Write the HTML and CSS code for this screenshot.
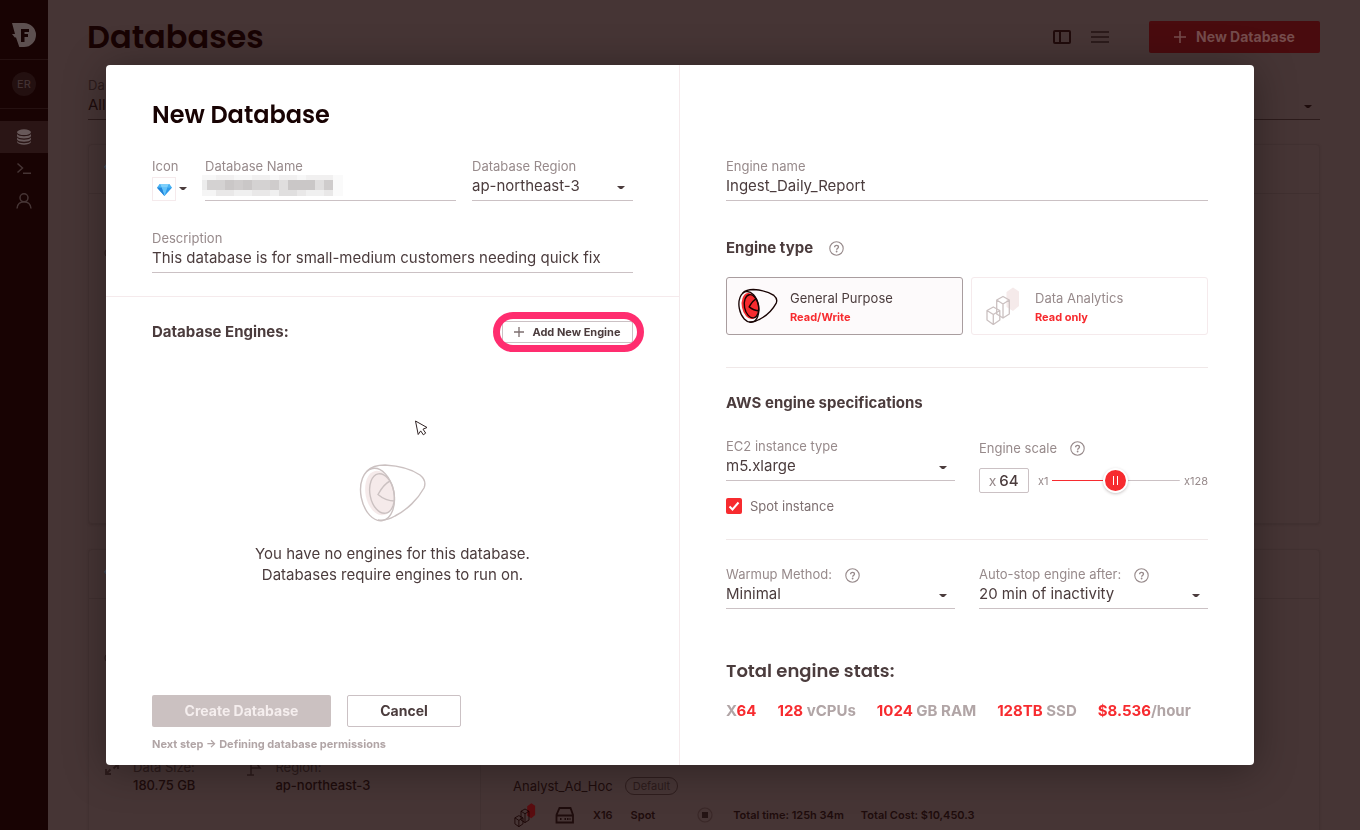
FILE: index.html
```html
<!DOCTYPE html>
<html lang="en">
<head>
<meta charset="utf-8">
<title>Databases</title>
<meta name="viewport" content="width=device-width, initial-scale=1">
<link rel="stylesheet" href="styles.css">
</head>
<body>
<svg class="defs" aria-hidden="true">
  <symbol id="plus" viewBox="0 0 12 12"><path d="M6 0v12M0 6h12" fill="none" stroke="currentColor" stroke-width="1.6"/></symbol>
  <symbol id="diamond" viewBox="0 0 16 14">
    <path d="M3 1h10l3 4-8 9-8-9z" fill="#2f9bea"/>
    <path d="M3 1h10l-2 4H5z" fill="#7fd0fb"/>
    <path d="M3 1L0 5h5zM13 1l3 4h-5z" fill="#49b4f5"/>
    <path d="M5 5h6l-3 9z" fill="#63c3fa"/>
    <path d="M0 5h5l3 9z" fill="#2484d8"/>
  </symbol>
  <symbol id="help" viewBox="0 0 15 15">
    <circle cx="7.500" cy="7.500" r="6.700" fill="none" stroke="currentColor" stroke-width="1.100"/>
    <path d="M5.600 6.200c0-1.200.8-1.900 1.950-1.900s1.900.7 1.900 1.700c0 1.500-1.800 1.400-1.800 2.700" fill="none" stroke="currentColor" stroke-width="1.350"/>
    <circle cx="7.600" cy="10.500" r=".9" fill="currentColor"/>
  </symbol>
  <symbol id="caret" viewBox="0 0 8 4"><path d="M.5 0h7v.6L5 2.900H3L.5.6z" fill="currentColor"/></symbol>
  <symbol id="engine" viewBox="0 0 68 60">
    <ellipse class="engine-core" cx="20.500" cy="30" rx="14" ry="22.500" transform="rotate(-11 20.500 30)"/>
    <g fill="none" stroke="currentColor">
      <ellipse cx="18.500" cy="31.500" rx="16.500" ry="26.500" transform="rotate(-11 18.500 31.500)"/>
      <ellipse cx="23" cy="30.500" rx="12" ry="20" transform="rotate(-11 23 30.500)"/>
      <path d="M8 8C13 3 19 2 26 2c17 1 28 5 35 10 5 4 6 8 4 13-6 11-17 22-29 28-6 3.500-11 5-17 4"/>
      <path d="M31 18c-4 2-9 8-12 13.500 4 3.500 11 6.500 17 6.500"/>
    </g>
  </symbol>
  <symbol id="cubes" viewBox="0 0 34 38">
    <path class="cube-back" d="M27 .5l6 4v14.500l-6 5-6.500-4V5z"/>
    <g fill="none" stroke="currentColor" stroke-width="1.300" stroke-linejoin="round">
      <path d="M17 9.500l6.300 3.500v14L17 31l-6.300-4V13zM10.700 13l6.300 4 6.300-4M17 17v14"/>
      <path d="M7.300 20l6.500 3.500v9.500l-6.500 4.500L1 33v-9.500zM1 23.500l6.300 4 6.500-4M7.300 27.500v10"/>
    </g>
  </symbol>
</svg>

<div class="app">
  <nav class="sidebar" aria-label="Main">
    <a class="logo" href="#" aria-label="Home">
      <svg width="24" height="24" viewBox="0 0 24 24"><path fill="#5d5050" d="M0 0h12a12 12 0 0 1 0 24H7.300L4 14.500H2.800L0 11h3z"/><path fill="#180303" d="M9 6h8v3h-4.500v2H16v3h-3.500v5H9z"/></svg>
    </a>
    <div class="account"><span class="avatar">ER</span></div>
    <a class="nav-item active" href="#" aria-label="Databases">
      <svg width="16" height="16" viewBox="0 0 16 16"><ellipse cx="8" cy="3.200" rx="7" ry="2.900" fill="#675859"/><path d="M1 5c1.500 3 12.500 3 14 0v2.200c-1.500 3-12.500 3-14 0zM1 8.600c1.500 3 12.500 3 14 0v1.900c-1.500 3-12.500 3-14 0zM1 11.900c1.500 3 12.500 3 14 0v1c-1.500 3.700-12.500 3.700-14 0z" fill="#675859"/></svg>
    </a>
    <a class="nav-item" href="#" aria-label="SQL">
      <svg width="16" height="16" viewBox="0 0 16 16" fill="none" stroke="#463535" stroke-width="1.500"><path d="M1.500 2.500l5 4.500-5 4.500M7 12.200h8"/></svg>
    </a>
    <a class="nav-item" href="#" aria-label="Users">
      <svg width="16" height="16" viewBox="0 0 16 16" fill="none" stroke="#463535" stroke-width="1.500"><circle cx="8" cy="4.800" r="4"/><path d="M1 15.500c.5-9 13.500-9 14 0"/></svg>
    </a>
  </nav>

  <main class="page">
    <header class="page-head">
      <h1>Databases</h1>
      <button class="icon-button" aria-label="Card view"><svg width="18" height="14" viewBox="0 0 18 14" fill="none" stroke="#200b0b" stroke-width="2"><rect x="1" y="1" width="16" height="12" rx="1"/><path d="M7 1v12"/></svg></button>
      <button class="icon-button" aria-label="List view"><svg width="18" height="12" viewBox="0 0 18 12" stroke="#2c1b1b" stroke-width="1.800"><path d="M0 1h18M0 6h18M0 11h18"/></svg></button>
      <button class="new-button"><svg width="12" height="12"><use href="#plus"/></svg>New Database</button>
    </header>
    <div class="filter">
      <label for="filter">Da</label>
      <select id="filter"><option>All</option></select>
    </div>
    <section class="card">
      <div class="card-head"><svg width="16" height="14"><use href="#diamond"/></svg></div>
      <div class="card-body first">
        <div class="card-side"><svg width="12" height="12" viewBox="0 0 12 12" fill="none" stroke="#2c1b1b"><circle cx="6" cy="6" r="5"/></svg></div>
      </div>
    </section>
    <section class="card">
      <div class="card-head"><svg width="16" height="14"><use href="#diamond"/></svg></div>
      <div class="card-body">
        <div class="card-side">
          <svg width="12" height="12" viewBox="0 0 12 12" fill="none" stroke="#2c1b1b"><circle cx="6" cy="6" r="5"/></svg>
          <dl class="facts">
            <div class="fact">
              <svg width="16" height="16" viewBox="0 0 16 16" fill="none" stroke="#2c1b1b" stroke-width="1.800"><path d="M2 9v5h5M2.500 13.500l4-4M9 4h5v5M13.500 4.500l-4 4"/></svg>
              <div><dt>Data Size:</dt><dd>180.75 GB</dd></div>
            </div>
            <div class="fact">
              <svg width="16" height="16" viewBox="0 0 16 16" fill="none" stroke="#2c1b1b" stroke-width="1.500"><path d="M5 1v14M1 15h7M5 3h9l-2 2.500 2 2.500H5"/></svg>
              <div><dt>Region:</dt><dd>ap-northeast-3</dd></div>
            </div>
          </dl>
        </div>
        <div class="card-engines">
          <div class="engine-title">Analyst_Ad_Hoc <span class="tag">Default</span></div>
          <div class="engine-row">
            <svg class="cubes-dark" width="24" height="24"><use href="#cubes"/></svg>
            <svg class="drive" width="20" height="17" viewBox="0 0 20 17" fill="none" stroke="#1e0c0c" stroke-width="1.800"><path d="M4.500 1h11L18 8v7.500H1.500V8zM1.500 8.500H18"/><path d="M5 12h1.500M9.500 12h6" stroke-dasharray="1.500 1"/></svg>
            <span class="scale">X16</span>
            <span class="spot">Spot</span>
            <svg class="stop" width="16" height="16" viewBox="0 0 16 16"><circle cx="8" cy="8" r="7" fill="none" stroke="#3a2828" stroke-width="1.200"/><path fill="#241414" d="M5 5h6v6H5z"/></svg>
            <span class="time">Total time: 125h 34m</span>
            <span>Total Cost: $10,450.3</span>
          </div>
        </div>
      </div>
    </section>
  </main>
</div>

<div class="backdrop">
  <form class="modal" role="dialog" aria-labelledby="dialog-title">
    <div class="pane pane-left">
      <div class="details">
        <h2 id="dialog-title">New Database</h2>
        <div class="detail-grid">
          <div class="field">
            <span class="label" id="icon-label">Icon</span>
            <button type="button" class="icon-picker" aria-labelledby="icon-label">
              <span class="icon-box"><svg width="15" height="13"><use href="#diamond"/></svg></span>
              <svg width="8" height="4"><use href="#caret"/></svg>
            </button>
          </div>
          <div class="field redacted">
            <label for="db-name">Database Name</label>
            <input id="db-name" type="text">
            <svg class="mosaic" width="143" height="21" viewBox="0 0 143 21" shape-rendering="crispEdges" aria-hidden="true">
              <path fill="#f7f7f7" d="M0 0h14v5H0zM32 0h18v5H32zM68 0h9v5h-9zM95 0h9v5h-9z"/>
              <path fill="#f1f0f0" d="M14 0h18v5H14zM50 0h18v5H50zM77 0h18v5H77zM104 0h27v5h-27z"/>
              <path fill="#fafafa" d="M131 0h10v21h-10z"/>
              <path fill="#ececec" d="M0 5h5v10H0z"/>
              <path fill="#d4d2d2" d="M5 5h18v10H5zM50 5h18v10H50z"/>
              <path fill="#cac7c7" d="M23 5h9v10h-9zM41 5h9v10h-9zM86 5h27v10H86z"/>
              <path fill="#cfcccc" d="M32 5h9v10h-9zM68 5h9v10h-9zM122 5h9v10h-9z"/>
              <path fill="#e0dede" d="M77 5h9v10h-9zM113 5h9v10h-9z"/>
              <path fill="#f5f5f5" d="M0 15h14v6H0z"/>
              <path fill="#e9e8e8" d="M14 15h18v6H14zM50 15h18v6H50zM95 15h9v6h-9zM122 15h9v6h-9z"/>
              <path fill="#f0f0f0" d="M32 15h18v6H32zM68 15h9v6h-9zM104 15h18v6h-18z"/>
              <path fill="#e0dfdf" d="M77 15h18v6H77z"/>
            </svg>
          </div>
          <div class="field">
            <label for="db-region">Database Region</label>
            <select id="db-region"><option>ap-northeast-3</option></select>
          </div>
        </div>
        <div class="field">
          <label for="db-desc">Description</label>
          <input id="db-desc" type="text" value="This database is for small-medium customers needing quick fix">
        </div>
      </div>

      <div class="engines">
        <div class="engines-head">
          <h3>Database Engines:</h3>
          <div class="highlight">
            <button type="button" class="add-button"><svg width="10" height="10"><use href="#plus"/></svg>Add New Engine</button>
          </div>
        </div>
        <div class="empty">
          <svg class="engine-pale" width="68" height="60"><use href="#engine"/></svg>
          <p>You have no engines for this database.<br>Databases require engines to run on.</p>
        </div>
        <div class="actions">
          <button type="button" class="create" disabled>Create Database</button>
          <button type="button" class="cancel">Cancel</button>
        </div>
        <p class="next">Next step → Defining database permissions</p>
      </div>
    </div>

    <div class="pane pane-right">
      <div class="field">
        <label for="engine-name">Engine name</label>
        <input id="engine-name" type="text" value="Ingest_Daily_Report">
      </div>

      <h3 class="type-title">Engine type <svg class="help" width="15" height="15"><use href="#help"/></svg></h3>
      <div class="types">
        <label class="type chosen">
          <input type="radio" name="type" checked>
          <svg class="engine-red" width="40" height="36"><use href="#engine"/></svg>
          <span class="type-text">General Purpose<b>Read/Write</b></span>
        </label>
        <label class="type">
          <input type="radio" name="type">
          <svg class="cubes-pale" width="40" height="38"><use href="#cubes"/></svg>
          <span class="type-text">Data Analytics<b>Read only</b></span>
        </label>
      </div>

      <hr>
      <h3>AWS engine specifications</h3>
      <div class="pair specs">
        <div>
          <div class="field">
            <label for="ec2">EC2 instance type</label>
            <select id="ec2"><option>m5.xlarge</option></select>
          </div>
          <label class="check"><input type="checkbox" checked>Spot instance</label>
        </div>
        <div class="scale-field">
          <label for="scale">Engine scale <svg class="help" width="15" height="15"><use href="#help"/></svg></label>
          <div class="scale-row">
            <span class="scale-box">x<input type="text" value="64" aria-label="Scale value"></span>
            <span>x1</span>
            <input id="scale" class="slider" type="range" min="1" max="128" value="64">
            <span>x128</span>
          </div>
        </div>
      </div>

      <hr class="hr-second">
      <div class="pair">
        <div class="field">
          <label for="warmup">Warmup Method: <svg class="help" width="15" height="15"><use href="#help"/></svg></label>
          <select id="warmup"><option>Minimal</option></select>
        </div>
        <div class="field">
          <label for="autostop">Auto-stop engine after: <svg class="help" width="15" height="15"><use href="#help"/></svg></label>
          <select id="autostop"><option>20 min of inactivity</option></select>
        </div>
      </div>

      <h2 class="stats-title">Total engine stats:</h2>
      <div class="stats">
        <span>X<b>64</b></span>
        <span><b>128</b> vCPUs</span>
        <span><b>1024</b> GB RAM</span>
        <span><b>128TB</b> SSD</span>
        <span><b>$8.536</b>/hour</span>
      </div>
    </div>
  </form>
</div>

<svg class="cursor" width="14" height="17" viewBox="0 0 14 17" aria-hidden="true"><path d="M1.500 1l11.500 6.500-4 1.700 2.700 3.900-2.400 1.700-2.600-3.900L4.200 14.500z" fill="#fff" stroke="#2f2223" stroke-width="1"/></svg>
</body>
</html>
```

FILE: styles.css
```css
* { box-sizing: border-box; }

body {
  margin: 0;
  background: #463535;
  color: #4b3c3d;
  font: 13px/16px Inter, "Liberation Sans", sans-serif;
}

h1, h2, h3, p, dl, dd { margin: 0; }
button, input, select { font: inherit; color: inherit; }
button { margin: 0; padding: 0; border: 0; background: none; }
svg { flex: none; }
.defs { display: none; }

/* Page behind the dialog */
.app { display: flex; height: 100vh; overflow: hidden; }

.sidebar { width: 48px; flex: none; background: #180303; }
.logo { display: flex; justify-content: center; padding: 23px 0 12px; border-bottom: 1px solid #251111; }
.account { display: flex; justify-content: center; padding: 12px 0; margin-bottom: 12px; border-bottom: 1px solid #251111; }
.avatar { width: 24px; height: 24px; border-radius: 50%; background: #231010; color: #423132; font-size: 11px; font-weight: 500; line-height: 24px; text-align: center; }
.nav-item { display: flex; align-items: center; justify-content: center; height: 32px; }
.nav-item.active { background: #2a1515; }

.page { flex: 1; padding: 20px 40px 0 39px; }
.page-head { display: flex; align-items: center; height: 34px; }
.page-head h1 { margin-right: auto; color: #180303; font: 600 32px/34px Poppins, Inter, sans-serif; }
.icon-button { display: flex; margin-right: 20px; }
.new-button { display: flex; align-items: center; justify-content: center; gap: 10px; width: 171px; height: 32px; margin-left: 20px; border-radius: 2px; background: #490b0e; color: #754c4c; font-size: 14px; font-weight: 700; }

.filter { margin: 23px 0 24px 1px; color: #2c1b1b; }
.filter label { display: block; line-height: 17px; }
.filter select { width: 100%; height: 26px; padding: 0 0 4px; border: 0; border-bottom: 1px solid #2c1b1b; border-radius: 0; appearance: none; color: #1e0c0c; font-size: 15px; line-height: 20px;
  background: url("data:image/svg+xml,%3Csvg xmlns='http://www.w3.org/2000/svg' width='8' height='4'%3E%3Cpath d='M.5 0h7v.6L5 2.900H3L.5.6z' fill='%231e0c0c'/%3E%3C/svg%3E") no-repeat right 8px top 11px; }

.card { margin: 0 0 25px 1px; border: 1px solid #413131; border-radius: 4px; box-shadow: 0 1px 2px #403030; }
.card-head { display: flex; align-items: center; height: 49px; padding-left: 15px; border-bottom: 1px solid #403030; }
.card-head svg { opacity: .2; }
.card-body { display: flex; min-height: 329px; }
.card-side { width: 392px; padding: 52px 15px 0; border-right: 1px solid #413131; }
.card-body.first .card-side { border: 0; }
.facts { display: flex; gap: 51px; margin-top: 91px; color: #1e0c0c; font-size: 13px; }
.fact { display: flex; gap: 13px; }
.fact svg { margin-top: 2px; }
.fact dt { color: #2c1b1b; line-height: 18px; }
.fact dd { font-weight: 500; line-height: 18px; }
.card-engines { padding: 177px 0 0 32px; color: #1e0c0c; }
.engine-title { display: flex; align-items: center; gap: 12px; font-size: 13px; line-height: 20px; }
.tag { padding: 0 7px; border: 1px solid #2f1e1e; border-radius: 9px; color: #2c1b1b; font-size: 11px; line-height: 16px; }
.engine-row { display: flex; align-items: center; height: 24px; margin-top: 7px; font-size: 11px; font-weight: 600; }
.drive { margin-left: 18px; }
.scale { margin-left: 18px; }
.spot { margin-left: 18px; }
.stop { margin: 0 20px 0 42px; }
.time { margin-right: 17px; }
.cubes-dark { --cube: #5a0d10; color: #180303; }
.cubes-pale { --cube: #f5eaea; color: #cbc1c1; }
.cube-back { fill: var(--cube); }

/* Dialog */
.backdrop { position: fixed; inset: 0; display: flex; padding: 65px 106px; overflow: auto; }
.modal { display: grid; grid-template-columns: 1fr 1fr; width: 100%; min-height: max-content; border-radius: 4px; background: #fff; box-shadow: 0 4px 40px rgba(0, 0, 0, .35); }
.pane-left { display: flex; flex-direction: column; border-right: 1px solid #f5eaec; }
.details { padding: 35px 46px 23px; border-bottom: 1px solid #f5eaec; }
h2 { color: #180303; font: 600 24px/30px Poppins, Inter, sans-serif; }
h3 { display: flex; align-items: center; gap: 16px; font-size: 15px; font-weight: 700; line-height: 20px; }

.detail-grid { display: grid; grid-template-columns: 37px 1fr 161px; gap: 16px; margin: 29px 0 30px; }
.field { display: flex; flex-direction: column; min-width: 0; }
.field > label, .label { display: flex; align-items: center; gap: 13px; height: 16px; padding-bottom: 2px; color: #978a8b; white-space: nowrap; }
.help { color: #978a8b; }
.field > label .help { margin-top: 2px; }
.field input, .field select { width: 100%; height: 26px; padding: 0 0 4px; border: 0; border-bottom: 1px solid #cbc1c4; border-radius: 0; background: none; outline: 0; font-size: 15px; }
.field select { appearance: none;
  background: url("data:image/svg+xml,%3Csvg xmlns='http://www.w3.org/2000/svg' width='8' height='4'%3E%3Cpath d='M.5 0h7v.6L5 2.900H3L.5.6z' fill='%234b3c3d'/%3E%3C/svg%3E") no-repeat right 8px top 11px; }
.icon-picker { display: flex; align-items: center; gap: 3px; height: 24px; margin-top: 2px; }
.icon-box { display: flex; align-items: center; justify-content: center; width: 24px; height: 24px; border: 1px solid #f5eaec; }
.redacted { position: relative; }
.mosaic { position: absolute; left: -3px; top: 16px; }

.engines { display: flex; flex: 1; flex-direction: column; padding: 24px 46px 14px; }
.engines-head { display: flex; align-items: center; justify-content: space-between; }
.highlight { position: relative; }
.highlight::after { content: ""; position: absolute; inset: -9px -11px -9px -9px; border: 7px solid #ff2d6f; border-radius: 20px; pointer-events: none; }
.add-button { display: flex; align-items: center; justify-content: center; gap: 8px; width: 131px; height: 22px; border: 1px solid #cbc1c4; border-radius: 2px; font-size: 11px; font-weight: 700; }
.add-button svg { color: #7d6f70; }
.empty { display: flex; flex: 1; flex-direction: column; align-items: center; justify-content: center; gap: 20px; padding-top: 10px; text-align: center; font-size: 15px; line-height: 21px; }
.engine-pale { color: #cbc1c1; fill: #f5eaea; stroke-width: 1.400px; }
.engine-red { color: #180303; fill: #f72b2f; stroke-width: 2.300px; }
.actions { display: flex; gap: 16px; }
.actions button { height: 32px; border-radius: 2px; font-size: 14px; font-weight: 700; }
.create { width: 179px; background: #cbc1c1; color: #f5eeee; }
.cancel { width: 114px; border: 1px solid #cbc1c4; }
.next { margin-top: 10px; color: #b1a5a6; font-size: 11px; font-weight: 700; line-height: 14px; }

.pane-right { padding: 94px 46px 44px; }
.type-title { margin: 37px 0 19px; }
.types { display: grid; grid-template-columns: 1fr 1fr; gap: 8px; }
.type { display: flex; align-items: center; gap: 12px; height: 58px; padding: 0 11px; border: 1px solid #f5eaec; border-radius: 3px; color: #978a8b; }
.type.chosen { border-color: #a99d9f; background: #fdfafb; color: #4b3c3d; }
.type input { position: absolute; width: 1px; height: 1px; margin: 0; opacity: 0; }
.type-text { padding-top: 2px; line-height: 20px; }
.type-text b { display: block; color: #f72b2f; font-size: 11px; font-weight: 700; line-height: 18px; }
hr { height: 1px; margin: 32px 0 25px; border: 0; background: #f0e8e8; }
.hr-second { margin: 25px 0 27px; }
.pair { display: grid; grid-template-columns: repeat(2, minmax(0, 1fr)); gap: 24px; }
.specs { margin-top: 26px; }
.check { display: flex; align-items: center; gap: 8px; margin-top: 17px; color: #7d6f70; }
.check input { width: 16px; height: 16px; margin: 0; border-radius: 2px; appearance: none;
  background: #f72b2f url("data:image/svg+xml,%3Csvg xmlns='http://www.w3.org/2000/svg' width='16' height='16'%3E%3Cpath d='M3.500 8.500l3 3 6-7' fill='none' stroke='white' stroke-width='2'/%3E%3C/svg%3E"); }
.scale-field > label { display: flex; align-items: center; gap: 13px; height: 16px; margin-top: 1px; color: #978a8b; }
.scale-row { display: flex; align-items: center; gap: 4px; margin-top: 12px; color: #978a8b; font-size: 11px; }
.scale-box { display: flex; align-items: center; justify-content: center; gap: 3px; width: 50px; height: 25px; margin-right: 5px; border: 1px solid #cbc1c4; border-radius: 2px; font-size: 14px; }
.scale-box input { width: 20px; padding: 0; border: 0; background: none; color: #4b3c3d; font-size: 15px; font-weight: 500; }
.slider { flex: 1; min-width: 0; height: 25px; margin: 0; appearance: none; background: linear-gradient(90deg, #f72b2f 50%, #cbc1c4 50%) center / 100% 1px no-repeat; }
.slider::-webkit-slider-thumb { width: 25px; height: 25px; border: 2px solid #fff; border-radius: 50%; appearance: none; box-shadow: 0 1px 3px rgba(75, 60, 61, .3);
  background: linear-gradient(90deg, #fff 1px, transparent 1px 4px, #fff 4px) center / 5px 9px no-repeat, #f72b2f; }
.stats-title { margin: 51px 0 19px; color: #4b3c3d; font-size: 18px; line-height: 22px; }
.stats { display: flex; flex-wrap: wrap; gap: 8px 21px; color: #b1a5a6; font-size: 15px; font-weight: 700; line-height: 20px; white-space: nowrap; }
.stats b { color: #f72b2f; font-weight: 700; }

.cursor { position: absolute; left: 414px; top: 420px; }
```
